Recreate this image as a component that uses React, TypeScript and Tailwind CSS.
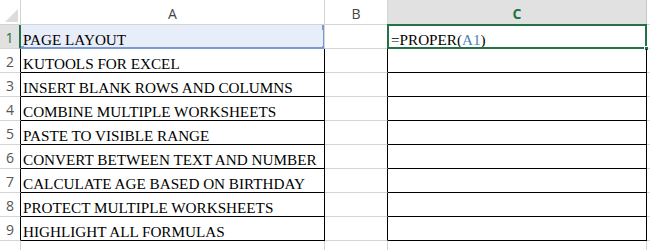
import React from "react";

const ROWS = [
  "PAGE LAYOUT",
  "KUTOOLS FOR EXCEL",
  "INSERT BLANK ROWS AND COLUMNS",
  "COMBINE MULTIPLE WORKSHEETS",
  "PASTE TO VISIBLE RANGE",
  "CONVERT BETWEEN TEXT AND NUMBER",
  "CALCULATE AGE BASED ON BIRTHDAY",
  "PROTECT MULTIPLE WORKSHEETS",
  "HIGHLIGHT ALL FORMULAS",
];

const serif = "font-['Liberation_Serif','Times_New_Roman',serif] text-[15.2px] leading-[17px] text-black";
const ui = "font-['Open_Sans','Liberation_Sans',sans-serif] text-[14px]";

function Handle({ className }: { className: string }) {
  return <span className={`absolute h-[5px] w-[5px] ${className}`} />;
}

export default function App() {
  return (
    <div className="h-[250px] w-[650px] overflow-hidden bg-white">
      <div className="grid grid-cols-[21px_304px_63px_259px_1fr] grid-rows-[25px_repeat(10,24px)]">
        {/* header row */}
        <div className="relative border-b border-r border-[#d4d4d4]">
          <svg className="absolute left-[5px] top-[9px]" width="13" height="13" viewBox="0 0 13 13">
            <polygon points="13,0 13,13 0,13" fill="#dcdcdc" />
          </svg>
        </div>
        <div className={`flex items-center justify-center border-b border-r border-[#d4d4d4] pt-[2px] text-[#444] ${ui}`}>A</div>
        <div className={`flex items-center justify-center border-b border-r border-[#d4d4d4] pt-[2px] text-[#444] ${ui}`}>B</div>
        <div className={`flex items-center justify-center border-b border-r border-[#c6c6c6] bg-[#e1e1e1] pt-[2px] font-bold text-[#217346] ${ui}`}>C</div>
        <div className="border-b border-[#d4d4d4]" />

        {ROWS.concat([""]).map((text, i) => {
          const row = i + 1;
          const inTable = row >= 2 && row <= 9;
          const aboveTable = row === 1;
          return (
            <React.Fragment key={row}>
              <div
                className={`flex items-center justify-center border-b border-[#d4d4d4] pt-[1px] ${ui} ${
                  row === 1
                    ? "border-r-2 border-r-[#217346] bg-[#e1e1e1] text-[#217346]"
                    : inTable
                      ? "border-r border-r-black text-[#555]"
                      : "border-r border-r-[#d4d4d4] text-[#555]"
                }`}
              >
                {row === 10 ? "" : row}
              </div>

              <div
                className={`relative flex items-end overflow-hidden whitespace-nowrap border-b border-r pl-[2px] ${serif} ${
                  row === 1
                    ? "border-b-[#7b9bd5] border-r-[#d4d4d4] bg-[#e8eef9]"
                    : inTable
                      ? "border-b-black border-r-black"
                      : "border-b-[#d4d4d4] border-r-[#d4d4d4]"
                }`}
              >
                {text}
                {row === 1 && (
                  <>
                    <span className="absolute bottom-[-1px] left-0 right-0 h-[2px] bg-[#7b9bd5]" />
                    <span className="absolute bottom-0 right-[-1px] top-0 w-[2px] bg-[#7b9bd5]" />
                    <Handle className="right-[-3px] top-0 bg-[#7b9bd5]" />
                    <Handle className="bottom-[-3px] right-[-3px] bg-[#7b9bd5]" />
                    <Handle className="bottom-[-3px] left-[-2px] bg-[#7b9bd5]" />
                  </>
                )}
              </div>

              <div
                className={`border-b border-r ${
                  inTable ? "border-b-[#d4d4d4] border-r-black" : "border-[#d4d4d4]"
                }`}
              />

              <div
                className={`relative flex items-end whitespace-nowrap border-b border-r pl-[3px] ${serif} ${
                  inTable || aboveTable ? "border-b-black border-r-black" : "border-b-[#d4d4d4] border-r-[#d4d4d4]"
                }`}
              >
                {row === 1 && (
                  <>
                    <span>
                      =PROPER(<span className="text-[#4f81bd]">A1</span>)
                    </span>
                    <span className="pointer-events-none absolute inset-[-1px] border-2 border-[#217346]" />
                    <Handle className="bottom-[-3px] right-[-3px] border border-white bg-[#217346]" />
                  </>
                )}
              </div>

              <div className="border-b border-[#d4d4d4]" />
            </React.Fragment>
          );
        })}
      </div>
    </div>
  );
}
